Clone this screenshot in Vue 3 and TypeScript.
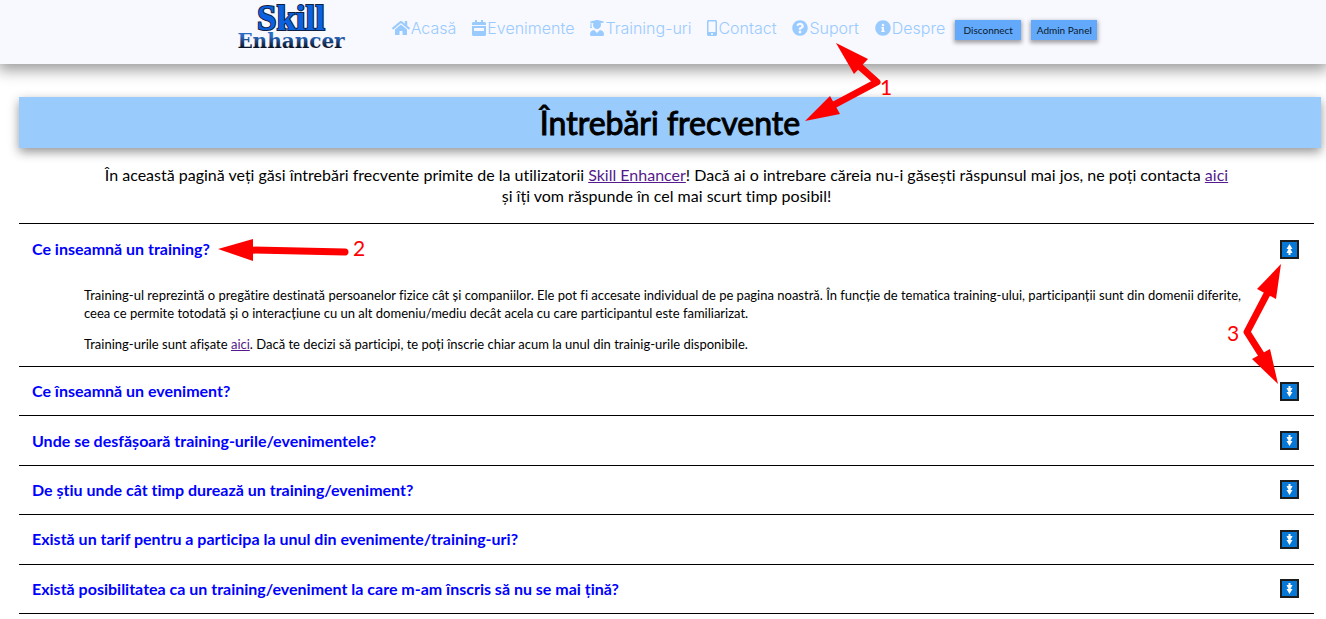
<script setup lang="ts">
import { ref } from 'vue'

interface NavItem {
  label: string
  box: string
  width: number
  path: string
}

interface Question {
  id: number
  title: string
}

const navItems: NavItem[] = [
  {
    label: 'Acasă',
    box: '0 0 576 512',
    width: 18,
    path: 'M280.37 148.26L96 300.11V464a16 16 0 0 0 16 16l112.06-.29a16 16 0 0 0 15.92-16V368a16 16 0 0 1 16-16h64a16 16 0 0 1 16 16v95.64a16 16 0 0 0 16 16.05L464 480a16 16 0 0 0 16-16V300L295.67 148.26a12.19 12.19 0 0 0-15.3 0zM571.6 251.47L488 182.56V44.05a12 12 0 0 0-12-12h-56a12 12 0 0 0-12 12v72.61L318.47 43a48 48 0 0 0-61 0L4.34 251.47a12 12 0 0 0-1.6 16.9l25.5 31A12 12 0 0 0 45.15 301l235.22-193.74a12.19 12.19 0 0 1 15.3 0L530.9 301a12 12 0 0 0 16.9-1.6l25.5-31a12 12 0 0 0-1.7-16.93z',
  },
  {
    label: 'Evenimente',
    box: '0 0 448 512',
    width: 14,
    path: 'M0 160V112c0-26 22-48 48-48h48V12c0-7 5-12 12-12h40c7 0 12 5 12 12v52h128V12c0-7 5-12 12-12h40c7 0 12 5 12 12v52h48c26 0 48 22 48 48v48zM0 192h448v272c0 26-22 48-48 48H48c-26 0-48-22-48-48zM76 256c-7 0-12 5-12 12v72c0 7 5 12 12 12h296c7 0 12-5 12-12v-72c0-7-5-12-12-12z',
  },
  {
    label: 'Training-uri',
    box: '0 0 448 512',
    width: 14,
    path: 'M319.4 320.6L224 416l-95.4-95.4C57.1 323.7 0 382.2 0 454.4v9.6c0 26.5 21.5 48 48 48h352c26.5 0 48-21.5 48-48v-9.6c0-72.2-57.1-130.7-128.6-133.8zM13.6 79.8l6.4 1.5v58.4c-7 4.2-12 11.5-12 20.3 0 8.4 4.6 15.4 11.1 19.7L3.5 242c-1.7 6.9 2.1 14 7.6 14h41.8c5.5 0 9.3-7.1 7.6-14l-15.6-62.3C51.4 175.4 56 168.4 56 160c0-8.8-5-16.1-12-20.3V87.1l66 15.9c-8.6 17.2-14 36.4-14 57 0 70.7 57.3 128 128 128s128-57.3 128-128c0-20.6-5.3-39.8-14-57l96.3-23.2c18.2-4.4 18.2-27.1 0-31.5l-190.4-46c-13-3.1-26.7-3.1-39.7 0L13.6 48.2c-18.1 4.4-18.1 27.2 0 31.6z',
  },
  {
    label: 'Contact',
    box: '0 0 320 512',
    width: 10,
    path: 'M272 0H48C21.5 0 0 21.5 0 48v416c0 26.5 21.5 48 48 48h224c26.5 0 48-21.5 48-48V48c0-26.5-21.5-48-48-48zM160 480c-17.7 0-32-14.3-32-32s14.3-32 32-32 32 14.3 32 32-14.3 32-32 32zm112-108c0 6.6-5.4 12-12 12H60c-6.6 0-12-5.4-12-12V60c0-6.6 5.4-12 12-12h200c6.6 0 12 5.4 12 12v312z',
  },
  {
    label: 'Suport',
    box: '0 0 512 512',
    width: 16,
    path: 'M504 256c0 136.997-111.043 248-248 248S8 392.997 8 256C8 119.083 119.043 8 256 8s248 111.083 248 248zM262.655 90c-54.497 0-89.255 22.957-116.549 63.758-3.536 5.286-2.353 12.415 2.715 16.258l34.699 26.31c5.205 3.947 12.621 3.008 16.665-2.122 17.864-22.658 30.113-35.797 57.303-35.797 20.429 0 45.698 13.148 45.698 32.958 0 14.976-12.363 22.667-32.534 33.976C247.128 238.528 216 254.941 216 296v4c0 6.627 5.373 12 12 12h56c6.627 0 12-5.373 12-12v-1.333c0-28.462 83.186-29.647 83.186-106.667 0-58.002-60.165-102-116.531-102zM256 338c-25.365 0-46 20.635-46 46 0 25.364 20.635 46 46 46s46-20.636 46-46c0-25.365-20.635-46-46-46z',
  },
  {
    label: 'Despre',
    box: '0 0 512 512',
    width: 16,
    path: 'M256 8C119.043 8 8 119.083 8 256c0 136.997 111.043 248 248 248s248-111.003 248-248C504 119.083 392.957 8 256 8zm0 110c23.196 0 42 18.804 42 42s-18.804 42-42 42-42-18.804-42-42 18.804-42 42-42zm56 254c0 6.627-5.373 12-12 12h-88c-6.627 0-12-5.373-12-12v-24c0-6.627 5.373-12 12-12h12v-64h-12c-6.627 0-12-5.373-12-12v-24c0-6.627 5.373-12 12-12h64c6.627 0 12 5.373 12 12v100h12c6.627 0 12 5.373 12 12v24z',
  },
]

const questions: Question[] = [
  { id: 2, title: 'Ce înseamnă un eveniment?' },
  { id: 3, title: 'Unde se desfășoară training-urile/evenimentele?' },
  { id: 4, title: 'De știu unde cât timp durează un training/eveniment?' },
  { id: 5, title: 'Există un tarif pentru a participa la unul din evenimente/training-uri?' },
  { id: 6, title: 'Există posibilitatea ca un training/eveniment la care m-am înscris să nu se mai țină?' },
]

const open = ref(true)
</script>

<template>
  <div class="page">
    <header class="topbar">
      <a href="#" class="logo" aria-label="Skill Enhancer">
        <svg class="logo-art" width="110" height="60" viewBox="0 0 110 60">
          <defs>
            <linearGradient id="enhancer" x1="0" y1="0" x2="0" y2="1">
              <stop offset="0.3" stop-color="#2a6cc4" />
              <stop offset="0.8" stop-color="#06101f" />
            </linearGradient>
          </defs>
          <text class="logo-top" x="52" y="30" text-anchor="middle" fill="#0b62e0">Skill</text>
          <text class="logo-bottom" x="52" y="48" text-anchor="middle" fill="url(#enhancer)">Enhancer</text>
        </svg>
      </a>
      <nav class="nav">
        <a v-for="item in navItems" :key="item.label" href="#" class="nav-link">
          <svg :width="item.width" height="16" :viewBox="item.box" aria-hidden="true">
            <path :d="item.path" fill="currentColor" fill-rule="evenodd" />
          </svg>
          <span>{{ item.label }}</span>
        </a>
      </nav>
      <div class="actions">
        <button type="button" class="action">Disconnect</button>
        <button type="button" class="action">Admin Panel</button>
      </div>
    </header>

    <main>
      <h1 class="title">Întrebări frecvente</h1>
      <p class="intro">
        În această pagină veți găsi întrebări frecvente primite de la utilizatorii
        <a href="#">Skill Enhancer</a>! Dacă ai o intrebare căreia nu-i găsești răspunsul mai jos, ne poți contacta
        <a href="#">aici</a><br />și îți vom răspunde în cel mai scurt timp posibil!
      </p>

      <section class="faq">
        <article class="entry">
          <div class="question first">
            <h2>Ce inseamnă un training?</h2>
            <button type="button" class="toggle" aria-label="Restrânge" @click="open = !open">
              <svg width="15" height="15" viewBox="0 0 15 15"><path d="M7.500 2L10.500 7H8.500L10.500 11H8.500V13H6.500V11H4.500L6.500 7H4.500z" fill="#fff" /></svg>
            </button>
          </div>
          <div v-if="open" class="answer">
            <p>
              Training-ul reprezintă o pregătire destinată persoanelor fizice cât și companiilor. Ele pot fi accesate
              individual de pe pagina noastră. În funcție de tematica training-ului, participanții sunt din domenii
              diferite,<br />ceea ce permite totodată și o interacțiune cu un alt domeniu/mediu decât acela cu care
              participantul este familiarizat.
            </p>
            <p>
              Training-urile sunt afișate <a href="#">aici</a>. Dacă te decizi să participi, te poți înscrie chiar acum
              la unul din trainig-urile disponibile.
            </p>
          </div>
        </article>
        <div class="closed">
          <article v-for="q in questions" :key="q.id" class="question">
            <h2>{{ q.title }}</h2>
            <button type="button" class="toggle" aria-label="Extinde">
              <svg width="15" height="15" viewBox="0 0 15 15"><path d="M7.500 13L4.500 8H6.500L4.500 4H6.500V2H8.500V4H10.500L8.500 8H10.500z" fill="#fff" /></svg>
            </button>
          </article>
        </div>
      </section>
    </main>

    <svg class="notes" width="1326" height="619" viewBox="0 0 1326 619">
      <g stroke="#f00" stroke-width="7" stroke-linecap="round" stroke-linejoin="round" fill="none">
        <path d="M858 65L877 82L830 107" />
        <path d="M250 250L345 252" />
        <path d="M1269 290L1247 332L1266 362" />
      </g>
      <g fill="#f00">
        <path d="M836 43L868 59L854 74z" />
        <path d="M805 121L830 96L840 114z" />
        <path d="M218 249L253 239V261z" />
        <path d="M1281 264L1276 299L1257 289z" />
        <path d="M1278 384L1252 359L1270 349z" />
      </g>
      <g class="note-text" fill="#f00">
        <text x="880" y="95">1</text>
        <text x="353" y="256">2</text>
        <text x="1227" y="341">3</text>
      </g>
    </svg>
  </div>
</template>

<style>
body {
  margin: 0;
  background: #fff;
}
</style>

<style scoped>
.page {
  position: relative;
  overflow: hidden;
  color: #000;
  font-family: Lato, "Open Sans", sans-serif;
  font-variant-ligatures: none;
}
.topbar {
  display: flex;
  align-items: flex-start;
  box-sizing: border-box;
  height: 64px;
  padding: 0 0 0 18%;
  background: #f8f8ff;
  box-shadow: 0 4px 14px 2px rgba(0, 0, 0, 0.4);
}
.logo {
  width: 110px;
  height: 60px;
}
.logo-art {
  overflow: visible;
}
.logo-top,
.logo-bottom {
  font-weight: 700;
}
.logo-top {
  font-family: "Liberation Serif", serif;
  font-size: 35px;
  stroke: #10213f;
  stroke-width: 2px;
  paint-order: stroke;
}
.logo-bottom {
  font-family: "DejaVu Serif", serif;
  font-size: 20px;
}
.nav {
  display: flex;
  gap: 16px;
  margin: 18px 0 0 43px;
}
.nav-link {
  display: flex;
  align-items: center;
  gap: 1px;
  color: #99cbff;
  font-family: Inter, sans-serif;
  font-size: 16px;
  font-weight: 300;
  line-height: 20px;
  text-decoration: none;
  white-space: nowrap;
}
.actions {
  display: flex;
  gap: 10px;
  margin: 20px 0 0 10px;
}
.action {
  width: 66px;
  height: 20px;
  padding: 0;
  border: 0;
  background: #62a8fb;
  box-shadow: 0 2px 4px 1px rgba(0, 0, 0, 0.35);
  color: #0b1a2c;
  font-family: Lato, sans-serif;
  font-size: 10px;
  white-space: nowrap;
}
.title {
  margin: 33px 5px 0 19px;
  background: #99cbfd;
  box-shadow: 0 4px 10px 0 rgba(0, 0, 0, 0.42);
  font-size: 32px;
  font-weight: 400;
  line-height: 51px;
  text-align: center;
  -webkit-text-stroke: 1px #000;
}
.intro {
  margin: 16px 12px 0 19px;
  font-size: 16px;
  line-height: 21px;
  text-align: center;
}
.intro a,
.answer a {
  color: #551a8b;
}
.faq {
  margin: 17px 12px 0 19px;
  border-top: 1px solid #000;
}
.entry {
  border-bottom: 1px solid #000;
}
.question {
  display: flex;
  align-items: center;
  justify-content: space-between;
  padding: 0 15px 0 13px;
}
.first {
  height: 50px;
}
.question h2 {
  margin: 0;
  color: #00f;
  font-size: 16px;
  font-weight: 700;
  line-height: 20px;
}
.toggle {
  display: flex;
  align-items: center;
  justify-content: center;
  box-sizing: border-box;
  width: 19px;
  height: 19px;
  padding: 0;
  border: 2px solid #1c1c1c;
  background: #0878d7;
}
.answer {
  padding: 12px 64px 13px 65px;
  font-size: 13px;
  line-height: 18px;
  white-space: nowrap;
}
.answer p {
  margin: 0 0 13px;
}
.answer p:last-child {
  margin: 0;
}
.closed {
  display: grid;
  grid-auto-rows: 1fr;
  min-height: 247px;
}
.closed .question {
  border-bottom: 1px solid #000;
}
.notes {
  position: absolute;
  top: 0;
  left: 0;
  pointer-events: none;
}
.note-text {
  font-family: Lato, sans-serif;
  font-size: 21px;
}
</style>
